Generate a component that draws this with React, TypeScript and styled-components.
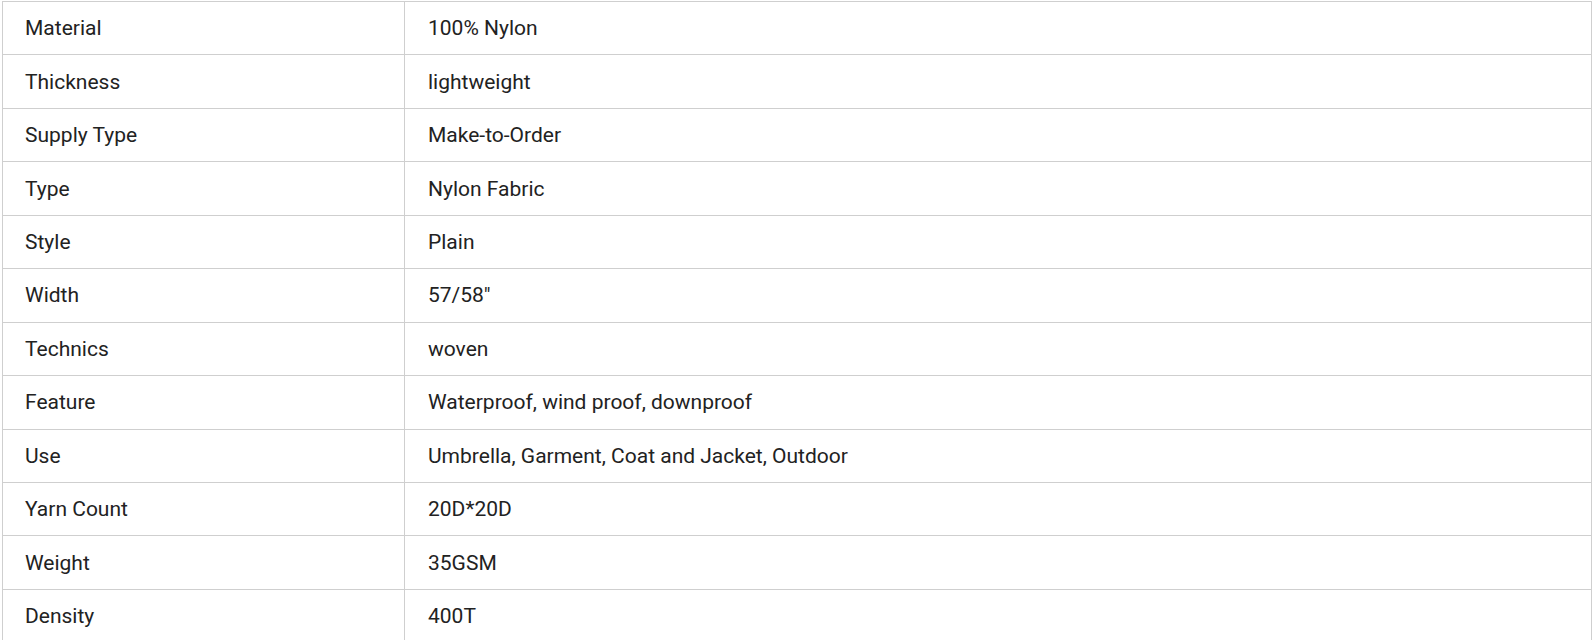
import React from "react";
import styled, { createGlobalStyle } from "styled-components";

const GlobalStyle = createGlobalStyle`
  html, body {
    margin: 0;
    padding: 0;
    background: #ffffff;
  }
  body {
    font-family: Roboto, "Liberation Sans", Arial, sans-serif;
  }
`;

const Page = styled.div`
  padding: 1px 0 0 2px;
`;

const Table = styled.div`
  width: 1590px;
  box-sizing: border-box;
  display: grid;
  grid-template-columns: 402px 1fr;
  grid-auto-rows: 53.45px;
  border-top: 1px solid #cfcfcf;
  border-left: 1px solid #cfcfcf;
`;

const Cell = styled.div<{ $kind: "label" | "value" }>`
  box-sizing: border-box;
  display: flex;
  align-items: center;
  padding: 0 22px 0 ${(p) => (p.$kind === "value" ? "23px" : "22px")};
  border-right: 1px solid #cfcfcf;
  border-bottom: 1px solid #cfcfcf;
  font-family: Roboto, "Liberation Sans", Arial, sans-serif;
  font-size: 21px;
  color: #222222;
  white-space: nowrap;
`;

const rows: [string, string][] = [
  ["Material", "100% Nylon"],
  ["Thickness", "lightweight"],
  ["Supply Type", "Make-to-Order"],
  ["Type", "Nylon Fabric"],
  ["Style", "Plain"],
  ["Width", '57/58"'],
  ["Technics", "woven"],
  ["Feature", "Waterproof, wind proof, downproof"],
  ["Use", "Umbrella, Garment, Coat and Jacket, Outdoor"],
  ["Yarn Count", "20D*20D"],
  ["Weight", "35GSM"],
  ["Density", "400T"],
];

export default function App() {
  return (
    <>
      <GlobalStyle />
      <Page>
        <Table>
          {rows.map(([k, v]) => (
            <React.Fragment key={k}>
              <Cell $kind="label">{k}</Cell>
              <Cell $kind="value">{v}</Cell>
            </React.Fragment>
          ))}
        </Table>
      </Page>
    </>
  );
}
